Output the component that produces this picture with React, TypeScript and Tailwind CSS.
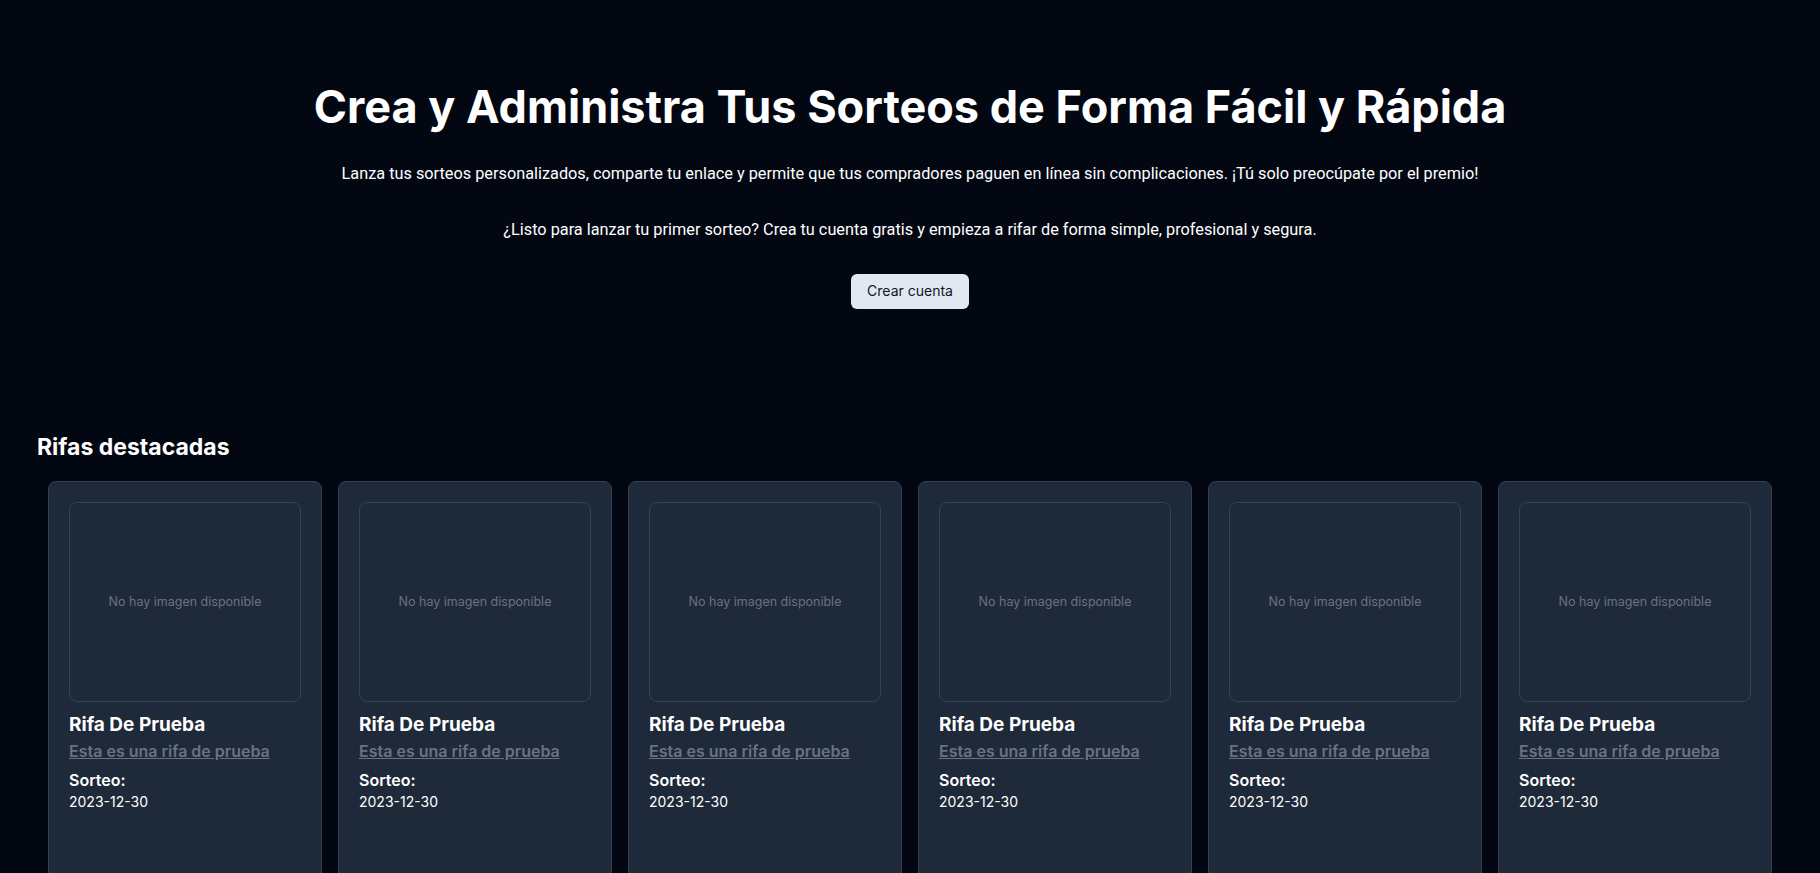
import React from "react";

const rifas = Array.from({ length: 6 }, (_, i) => ({
  id: i,
  titulo: "Rifa De Prueba",
  descripcion: "Esta es una rifa de prueba",
  fecha: "2023-12-30",
}));

function RifaCard({ titulo, descripcion, fecha }: { titulo: string; descripcion: string; fecha: string }) {
  return (
    <div className="w-[274px] shrink-0 h-[420px] rounded-lg border border-gray-700 bg-gray-800 p-5">
      <div className="flex h-[200px] w-full items-center justify-center rounded-lg border border-gray-700">
        <p className="text-[12.5px] text-gray-500">No hay imagen disponible</p>
      </div>
      <p className="mt-[9px] text-[19px] leading-7 font-bold text-white">{titulo}</p>
      <a href="#" className="block text-base font-semibold leading-[24px] text-gray-500 underline">
        {descripcion}
      </a>
      <p className="mt-[5px] font-semibold text-white">Sorteo:</p>
      <p className="text-sm text-white">{fecha}</p>
    </div>
  );
}

export default function App() {
  return (
    <main className="min-h-screen w-full bg-[#030712] font-['Inter',sans-serif] text-white overflow-hidden">
      <section className="flex flex-col items-center pt-[83px] text-center">
        <h1 className="text-[45px] font-bold leading-[48px]">
          Crea y Administra Tus Sorteos de Forma Fácil y Rápida
        </h1>
        <p className="mt-[31px] font-['Roboto',sans-serif] text-[16.3px]">
          Lanza tus sorteos personalizados, comparte tu enlace y permite que tus compradores paguen en línea sin complicaciones. ¡Tú solo preocúpate por el premio!
        </p>
        <p className="mt-[32px] font-['Roboto',sans-serif] text-[16.3px]">
          ¿Listo para lanzar tu primer sorteo? Crea tu cuenta gratis y empieza a rifar de forma simple, profesional y segura.
        </p>
        <button className="mt-[31px] h-[35px] rounded-md bg-slate-200 px-4 text-sm text-slate-900">
          Crear cuenta
        </button>
      </section>
      <section className="px-[37px] pt-[122px]">
        <h2 className="text-[23px] leading-8 font-bold">Rifas destacadas</h2>
        <div className="mt-[18px] flex gap-4 px-[11px]">
          {rifas.map((r) => (
            <RifaCard key={r.id} {...r} />
          ))}
        </div>
      </section>
    </main>
  );
}
